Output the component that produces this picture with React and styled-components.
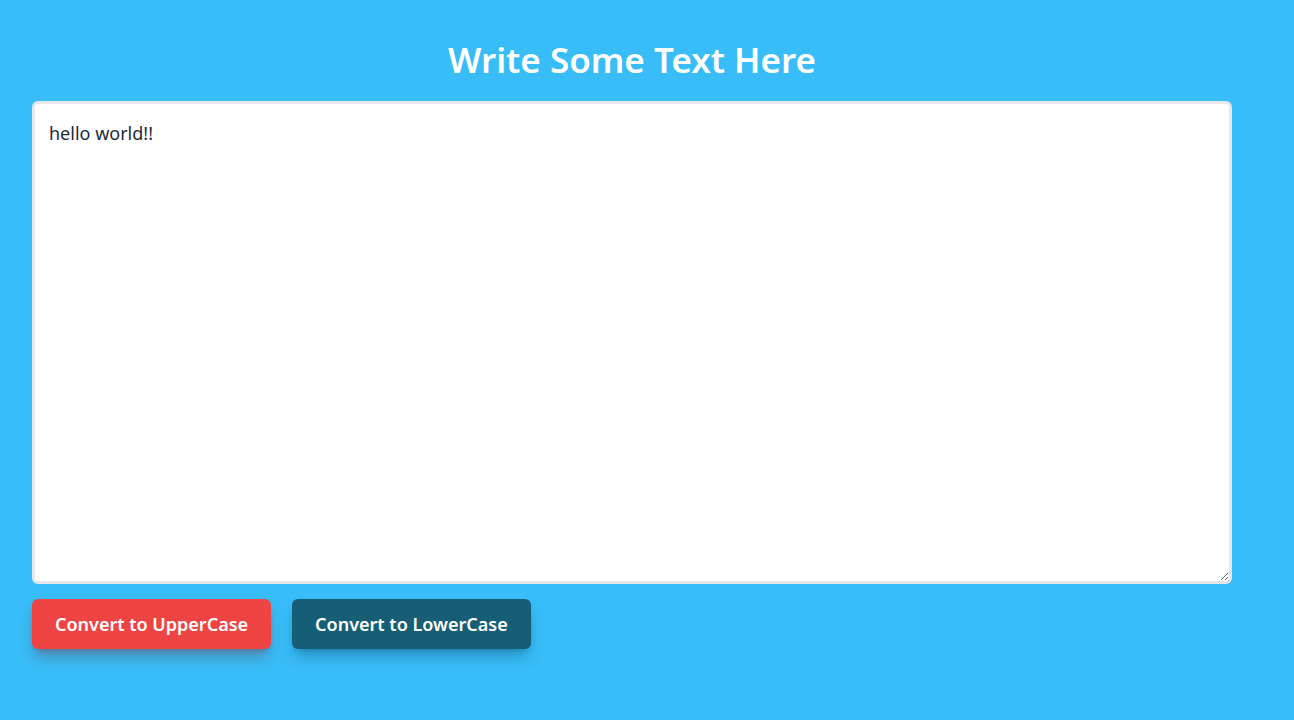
import styled, { createGlobalStyle } from 'styled-components';

const GlobalStyle = createGlobalStyle`
  body {
    margin: 0;
    background-color: #38bdf8;
    font-family: "Noto Sans", "Open Sans", sans-serif;
  }
`;

// 페이지 전체
const Page = styled.div`
  min-height: 720px;
  padding: 38px 32px 0;
  box-sizing: border-box;
`;

const Container = styled.div`
  width: 1200px;
  display: flex;
  flex-direction: column;
`;

const Heading = styled.h1`
  margin: 0 0 19px;
  font-size: 35px;
  line-height: 44px;
  font-weight: 600;
  color: #ffffff;
  text-align: center;
`;

const TextArea = styled.textarea`
  width: 100%;
  height: 483px;
  box-sizing: border-box;
  padding: 15px 14px;
  border: 3px solid #e5e7eb;
  border-radius: 6px;
  font-family: inherit;
  font-size: 18px;
  line-height: 28px;
  color: #1f2937;
  background: #ffffff;
  outline: none;
  resize: vertical;
`;

const ButtonRow = styled.div`
  display: flex;
  gap: 21px;
  margin-top: 15px;
`;

// 버튼 (색상과 그림자 색은 prop으로)
const Button = styled.button`
  height: 50px;
  padding: 0 23px;
  border: none;
  border-radius: 6px;
  font-family: inherit;
  font-size: 18px;
  font-weight: 600;
  color: #ffffff;
  background-color: ${props => props.$bg};
  box-shadow: 0 10px 15px -3px ${props => props.$shadow}, 0 4px 6px -4px ${props => props.$shadow};
  cursor: pointer;
`;

export default function App() {
  return (
    <>
      <GlobalStyle />
      <Page>
        <Container>
          <Heading>Write Some Text Here</Heading>
          <TextArea defaultValue="hello world!!" />
          <ButtonRow>
            <Button $bg="#ef4444" $shadow="rgba(127, 29, 29, 0.35)">Convert to UpperCase</Button>
            <Button $bg="#155e75" $shadow="rgba(8, 51, 68, 0.3)">Convert to LowerCase</Button>
          </ButtonRow>
        </Container>
      </Page>
    </>
  );
}
